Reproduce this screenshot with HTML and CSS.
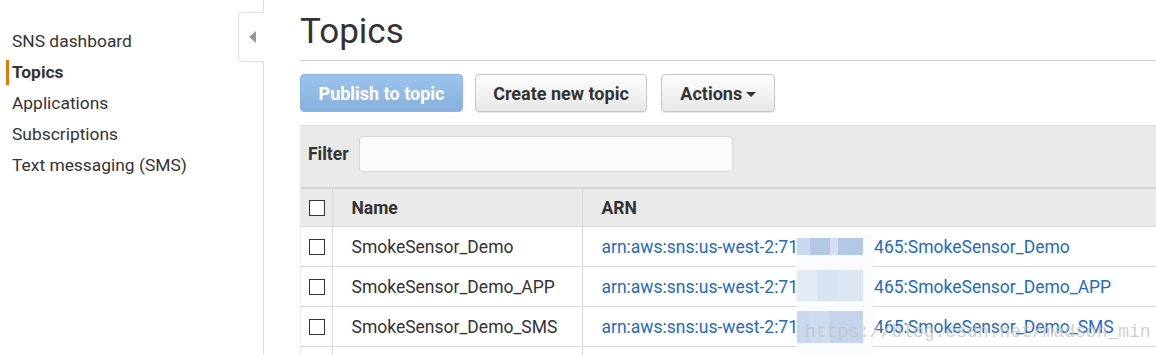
FILE: index.html
```html
<!DOCTYPE html>
<html lang="en">
<head>
    <meta charset="UTF-8">
    <title>SNS Topics</title>
    <link rel="stylesheet" href="styles.css">
</head>
<body>
    <div class="page">
        <nav class="sidebar">
            <ul class="nav">
                <li>SNS dashboard</li>
                <li class="active">Topics</li>
                <li>Applications</li>
                <li>Subscriptions</li>
                <li>Text messaging (SMS)</li>
            </ul>
            <div class="collapse-tab">
                <svg width="8" height="12" viewBox="0 0 8 12"><path d="M8 0 L8 12 L1 6 Z" fill="#999"/></svg>
            </div>
        </nav>

        <main class="content">
            <h1>Topics</h1>

            <div class="toolbar">
                <button class="btn btn-primary">Publish to topic</button>
                <button class="btn btn-create">Create new topic</button>
                <button class="btn btn-actions">Actions <span class="caret"></span></button>
            </div>

            <section class="panel">
                <div class="filter">
                    <label for="filter">Filter</label>
                    <input type="text" id="filter">
                </div>

                <table class="topics">
                    <thead>
                        <tr>
                            <th class="col-check"><span class="check"></span></th>
                            <th class="col-name">Name</th>
                            <th>ARN</th>
                        </tr>
                    </thead>
                    <tbody>
                        <tr>
                            <td class="col-check"><span class="check"></span></td>
                            <td>SmokeSensor_Demo</td>
                            <td class="arn">arn:aws:sns:us-west-2:71<span class="hidden-id"></span>465:SmokeSensor_Demo</td>
                        </tr>
                        <tr>
                            <td class="col-check"><span class="check"></span></td>
                            <td>SmokeSensor_Demo_APP</td>
                            <td class="arn">arn:aws:sns:us-west-2:71<span class="hidden-id"></span>465:SmokeSensor_Demo_APP</td>
                        </tr>
                        <tr>
                            <td class="col-check"><span class="check"></span></td>
                            <td>SmokeSensor_Demo_SMS</td>
                            <td class="arn">arn:aws:sns:us-west-2:71<span class="hidden-id"></span>465:SmokeSensor_Demo_SMS</td>
                        </tr>
                        <tr>
                            <td class="col-check"></td>
                            <td></td>
                            <td></td>
                        </tr>
                    </tbody>
                </table>
            </section>

            <!-- pixelated blur over the account id -->
            <div class="blur">
                <span class="b1"></span><span class="b2"></span><span class="b3"></span>
            </div>
            <div class="watermark">https://blog.csdn.net/madson_min</div>
        </main>
    </div>
</body>
</html>
```

FILE: styles.css
```css
body {
    margin: 0;
    font-family: Roboto, "Liberation Sans", sans-serif;
    color: #333;
    background: #fff;
    overflow: hidden;
}

.page {
    display: flex;
    height: 355px;
}

.sidebar {
    position: relative;
    width: 264px;
    flex: none;
    border-right: 1px solid #ddd;
    box-sizing: border-box;
}

.nav {
    list-style: none;
    margin: 0;
    padding: 26px 0 0 0;
}

.nav li {
    font-size: 17.4px;
    line-height: 31px;
    border-left: 3px solid transparent;
    margin-left: 6px;
    padding-left: 3px;
    color: #333;
}

.nav li.active {
    font-weight: bold;
    border-left-color: #e07b00;
    line-height: 25px;
    margin: 3px 0 3px 6px;
}

.collapse-tab {
    position: absolute;
    top: 12px;
    right: -1px;
    width: 26px;
    height: 50px;
    box-sizing: border-box;
    border: 1px solid #ddd;
    border-right: none;
    border-radius: 5px 0 0 5px;
    background: #fff;
    display: flex;
    align-items: center;
    justify-content: center;
}

.content {
    position: relative;
    flex: 1;
    padding-left: 36px;
}

h1 {
    margin: 0;
    padding: 12px 0 0;
    font-size: 35px;
    font-weight: normal;
    line-height: 40px;
    height: 48px;
    border-bottom: 1px solid #ccc;
    color: #333;
}

.toolbar {
    display: flex;
    gap: 12px;
    padding: 13px 0 13px;
}

.btn {
    font-family: Roboto, "Liberation Sans", sans-serif;
    font-size: 18px;
    font-weight: bold;
    color: #333;
    height: 38px;
    padding: 0;
    border: 1px solid #c6c6c6;
    border-radius: 4px;
    background: linear-gradient(#fdfdfd, #e8e8e8);
    box-shadow: 0 1px 1px rgba(0, 0, 0, 0.1);
}

.btn-primary {
    color: #fff;
    border-color: #8ab4e0;
    background: linear-gradient(#9bc3ec, #87b1dd);
    box-shadow: none;
    width: 163px;
}

.btn-create {
    width: 172px;
}

.btn-actions {
    width: 114px;
    margin-left: 2px;
}

.caret {
    display: inline-block;
    border-left: 5px solid transparent;
    border-right: 5px solid transparent;
    border-top: 5px solid #333;
    vertical-align: middle;
    margin-left: -1px;
}

.panel {
    background: #e9e9e9;
    border-top: 1px solid #ddd;
}

.filter {
    display: flex;
    align-items: center;
    gap: 10px;
    height: 36px;
    padding: 10px 0 15px 8px;
}

.filter label {
    font-size: 17.5px;
    font-weight: bold;
    color: #333;
}

.filter input {
    width: 374px;
    height: 36px;
    box-sizing: border-box;
    border: 1px solid #d8d8d8;
    border-radius: 4px;
    background: #fbfbfb;
}

.topics {
    width: calc(100% - 1px);
    margin-left: 1px;
    border-collapse: collapse;
    font-size: 17.5px;
}

.topics thead tr {
    border-top: 2px solid #d5d5d5;
}

.topics th {
    text-align: left;
    font-weight: bold;
    height: 37px;
    background: #eaeaea;
    padding: 0 0 0 19px;
    border-right: 1px solid #d8d8d8;
}

.topics td {
    height: 39px;
    padding: 0 0 0 19px;
    background: #fff;
    border-top: 1px solid #d8d8d8;
    border-right: 1px solid #d8d8d8;
}

.topics th:last-child,
.topics td:last-child {
    border-right: none;
}

.topics .col-check {
    width: 31px;
    padding: 0 0 0 8px;
    box-sizing: border-box;
}

.topics .col-name {
    width: 230px;
}

.check {
    display: block;
    width: 14px;
    height: 14px;
    border: 1px solid #333;
    background: #fff;
    margin-top: 1px;
}

.arn {
    color: #1f6bc2;
}

.hidden-id {
    display: inline-block;
    width: 76px;
}

.blur {
    position: absolute;
    left: 533px;
    top: 233px;
    width: 76px;
    height: 122px;
    background: rgba(250, 251, 253, 0.96);
    border-radius: 8px;
}

.blur span {
    position: absolute;
    left: 0;
    width: 66px;
}

.blur .b1 {
    top: 5px;
    height: 17px;
    background: linear-gradient(90deg, #c9d8ee 0 20%, #b3c8e5 20% 50%, #d3dff0 50% 62%, #b3c8e5 62% 100%);
}

.blur .b2 {
    top: 37px;
    height: 31px;
    background: linear-gradient(90deg, #e3eaf5 0 30%, #d7e2f2 30% 60%, #dde6f3 60% 100%);
}

.blur .b3 {
    top: 78px;
    height: 32px;
    background: linear-gradient(90deg, #c8d8ee 0 20%, #cddbef 20% 50%, #c3d4ec 50% 100%);
}

.watermark {
    position: absolute;
    left: 541px;
    top: 322px;
    font-family: "Liberation Mono", monospace;
    font-size: 18px;
    color: rgba(195, 195, 195, 0.8);
    white-space: nowrap;
}
```
